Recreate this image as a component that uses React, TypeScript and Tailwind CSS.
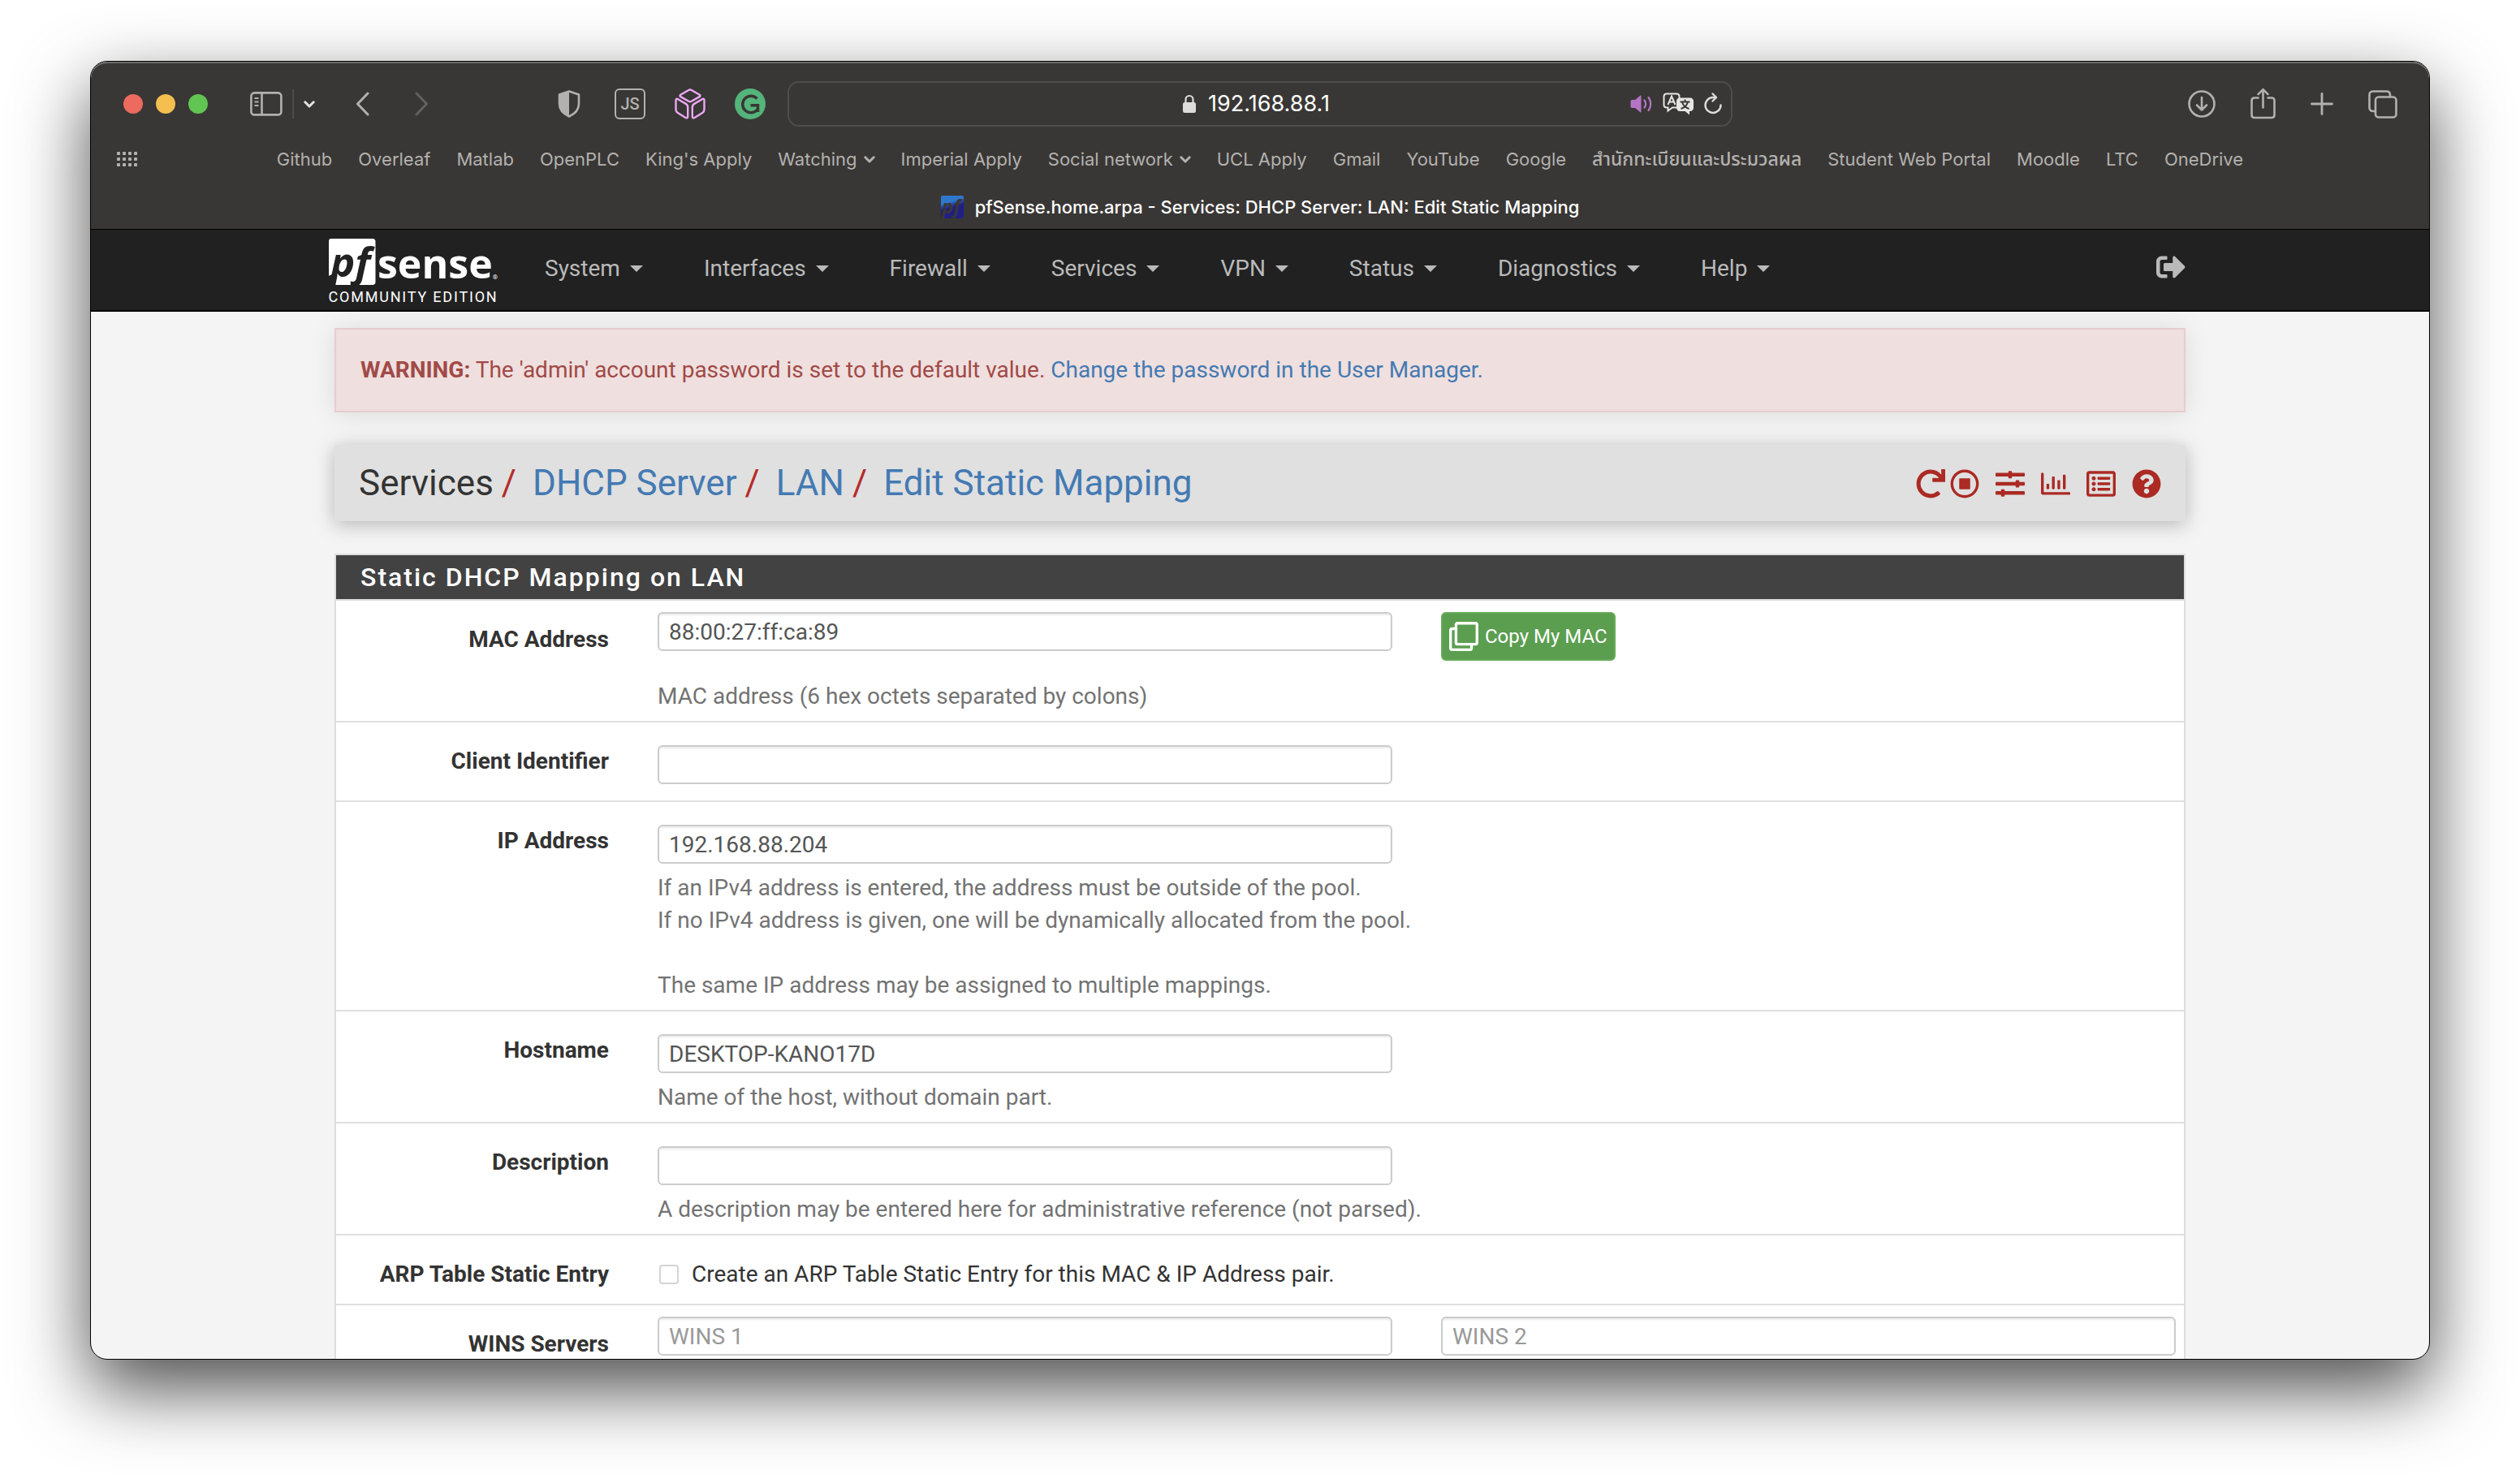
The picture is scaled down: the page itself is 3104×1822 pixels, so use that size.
import React from "react";
import {
  FaRedo,
  FaRegChartBar,
  FaRegClone,
  FaRegListAlt,
  FaRegStopCircle,
  FaQuestionCircle,
  FaSignOutAlt,
  FaSlidersH,
} from "react-icons/fa";

const bookmarks: { label: string; folder?: boolean; thai?: boolean }[] = [
  { label: "Github" },
  { label: "Overleaf" },
  { label: "Matlab" },
  { label: "OpenPLC" },
  { label: "King's Apply" },
  { label: "Watching", folder: true },
  { label: "Imperial Apply" },
  { label: "Social network", folder: true },
  { label: "UCL Apply" },
  { label: "Gmail" },
  { label: "YouTube" },
  { label: "Google" },
  { label: "สำนักทะเบียนและประมวลผล", thai: true },
  { label: "Student Web Portal" },
  { label: "Moodle" },
  { label: "LTC" },
  { label: "OneDrive" },
];

const menus = ["System", "Interfaces", "Firewall", "Services", "VPN", "Status", "Diagnostics", "Help"];

function SmallChevron({ className }: { className?: string }) {
  return (
    <svg viewBox="0 0 14 9" width="14" height="9" fill="none" stroke="currentColor" strokeWidth="3" strokeLinecap="round" strokeLinejoin="round" className={className}>
      <path d="M1.8 1.8 7 7l5.2-5.2" />
    </svg>
  );
}

function WindowControls() {
  return (
    <div className="flex gap-4">
      <button aria-label="Close" className="size-6 rounded-full bg-[#ed6a5e]" />
      <button aria-label="Minimise" className="size-6 rounded-full bg-[#f5bf4f]" />
      <button aria-label="Zoom" className="size-6 rounded-full bg-[#61c554]" />
    </div>
  );
}

function LeftTools() {
  return (
    <div className="flex items-center pl-10 text-[#b3b1af]">
      <WindowControls />
      <button aria-label="Sidebar" className="ml-[52px]">
        <svg viewBox="0 0 40 30" width="40" height="30" fill="none" stroke="currentColor" strokeWidth="2.6">
          <rect x="1.4" y="1.4" width="37" height="27" rx="4" />
          <path d="M14.5 1.5v27" />
          <path d="M5.5 8h5M5.5 12.5h5M5.5 17h5" strokeWidth="1.8" />
        </svg>
      </button>
      <span className="ml-3 h-9 w-0.5 bg-[#4c4b49]" />
      <button aria-label="Tab groups" className="ml-3 text-[#e4e3e2]">
        <SmallChevron />
      </button>
      <button aria-label="Back" className="ml-[50px]">
        <svg viewBox="0 0 17 30" width="17" height="30" fill="none" stroke="currentColor" strokeWidth="3" strokeLinecap="round" strokeLinejoin="round">
          <path d="M15 2 2.5 15 15 28" />
        </svg>
      </button>
      <button aria-label="Forward" className="ml-14 text-[#62615f]">
        <svg viewBox="0 0 17 30" width="17" height="30" fill="none" stroke="currentColor" strokeWidth="3" strokeLinecap="round" strokeLinejoin="round">
          <path d="M2 2l12.500 13L2 28" />
        </svg>
      </button>
      <div className="ml-auto flex items-center gap-9 pr-[27px]">
        <button aria-label="Privacy report">
          <svg viewBox="0 0 38 38" width="38" height="38">
            <path d="M18 3.500 30 7.500v11.500c0 7.500-5.500 12.500-12 15.500C11.500 31.500 6 26.500 6 19V7.500z" fill="none" stroke="#b3b1af" strokeWidth="2.6" strokeLinejoin="round" />
            <path d="M18 3.500v31C11.500 31.500 6 26.500 6 19V7.500z" fill="#b3b1af" />
          </svg>
        </button>
        <button aria-label="JavaScript blocker" className="flex size-[38px] items-center justify-center rounded-md border-2 border-[#b3b1af] font-['Roboto',sans-serif] text-xl font-medium text-[#b3b1af]">
          JS
        </button>
        <button aria-label="Cube extension">
          <svg viewBox="0 0 38 38" width="38" height="38" fill="none" stroke="#eca8f6" strokeWidth="2.400" strokeLinejoin="round">
            <path d="M17.300 2 7.300 7.800c-1.100.7-1.100 1.700 0 2.300L17.300 15.800c1.200.6 2.200.6 3.400 0L30.700 10.100c1.100-.6 1.100-1.600 0-2.300L20.700 2c-1.200-.7-2.200-.7-3.400 0z" />
            <path d="M1.500 14.500v11.500c0 2 .7 3 2.300 4L13.500 36c1.600.9 2.700.3 2.700-1.500V23c0-2-.7-3.100-2.400-4.100L4.200 13.200c-1.600-.9-2.700-.4-2.700 1.300z" />
            <path d="M36.500 14.500v11.500c0 2-.7 3-2.300 4L24.500 36c-1.600.9-2.700.3-2.700-1.500V23c0-2 .7-3.100 2.400-4.100l9.600-5.700c1.600-.9 2.700-.4 2.700 1.300z" />
          </svg>
        </button>
        <button aria-label="Grammarly">
          <svg viewBox="0 0 38 38" width="38" height="38" fill="none">
            <circle cx="19" cy="19" r="19" fill="#54b47a" />
            <path d="M27.500 12.500A10.300 10.300 0 1 0 28 26" stroke="#393735" strokeWidth="3.500" />
            <path d="M19.500 20.800H28.500V29" stroke="#393735" strokeWidth="3.500" />
          </svg>
        </button>
      </div>
    </div>
  );
}

function AddressBar() {
  return (
    <div className="flex h-14 items-center rounded-[14px] border-2 border-[#4e4d4b] pr-2.5">
      <div className="flex-1" />
      <label className="flex items-center gap-3.5">
        <svg viewBox="0 0 18 24" width="18" height="24" aria-label="Address">
          <rect x="1" y="10" width="16" height="13" rx="2.500" fill="#dddcdb" />
          <path d="M4.500 11V6.500a4.500 4.500 0 0 1 9 0V11" fill="none" stroke="#dddcdb" strokeWidth="2.200" />
        </svg>
        <input
          type="text"
          defaultValue="192.168.88.1"
          className="field-sizing-content bg-transparent font-['Inter',sans-serif] text-[27px] leading-8 text-white outline-none"
        />
      </label>
      <div className="flex flex-1 items-center justify-end gap-3">
        <button aria-label="Mute tab">
          <svg viewBox="0 0 28 24" width="28" height="24" fill="none" stroke="#b674c6" strokeWidth="2.200" strokeLinecap="round">
            <path d="M1 8.500C1 8 1.400 7.500 2 7.500h4L13 1.800v20.400L6 16.500H2c-.6 0-1-.5-1-1z" fill="#b674c6" strokeWidth="1" strokeLinejoin="round" />
            <path d="M17.500 7.500c2 2.700 2 6.300 0 9M22.500 4c3.600 4.700 3.600 11.300 0 16" />
          </svg>
        </button>
        <button aria-label="Translate">
          <svg viewBox="0 0 38 28" width="38" height="28" fill="none">
            <path d="M17 18.500H12L6.500 22.500v-4H5c-2 0-3.500-1.500-3.500-3.500V5c0-2 1.500-3.500 3.500-3.500h12c2 0 3.500 1.500 3.500 3.500v2" stroke="#e6e5e4" strokeWidth="2" />
            <path d="M6.500 15 11 4.500 15.500 15M8 11.500h6" stroke="#e6e5e4" strokeWidth="2" />
            <path d="M21 6.500h13c2.200 0 4 1.800 4 4v8.500c0 2.200-1.800 4-4 4h-1v4.500L27.500 23H21c-2.200 0-4-1.800-4-4v-8.500c0-2.200 1.800-4 4-4z" fill="#e6e5e4" />
            <path d="M21.500 11.500h12M27.500 8.500v3M31 11.500c-1 4-4.500 7.300-8.500 8.500M24 11.500c1 4 4.500 7.300 8.500 8.500" stroke="#393735" strokeWidth="1.900" />
          </svg>
        </button>
        <button aria-label="Reload">
          <svg viewBox="0 0 24 28" width="24" height="28" fill="none" stroke="#dddcdb" strokeWidth="2.400" strokeLinecap="round" strokeLinejoin="round">
            <path d="M21.500 15.500A9.500 9.500 0 1 1 12 6h3.500" />
            <path d="M11.500 1.500 16 6l-4.500 4.500" />
          </svg>
        </button>
      </div>
    </div>
  );
}

function RightTools() {
  return (
    <div className="flex items-center justify-end gap-[43px] pr-[39px] text-[#b3b1af]">
      <button aria-label="Downloads">
        <svg viewBox="0 0 34 34" width="34" height="34" fill="none" stroke="currentColor" strokeWidth="2.600" strokeLinecap="round" strokeLinejoin="round">
          <circle cx="17" cy="17" r="15.500" />
          <path d="M17 9v15.500M11 18.500l6 6 6-6" />
        </svg>
      </button>
      <button aria-label="Share">
        <svg viewBox="0 0 31 40" width="31" height="40" fill="none" stroke="currentColor" strokeWidth="2.600" strokeLinecap="round" strokeLinejoin="round">
          <path d="M9.500 12.500H5c-2.200 0-3.500 1.300-3.500 3.500v17.500C1.500 35.700 2.800 37 5 37h21c2.200 0 3.500-1.300 3.500-3.500V16c0-2.200-1.300-3.500-3.500-3.500h-4.500" />
          <path d="M15.500 24.500V2.500M9.500 8.200l6-6 6 6" />
        </svg>
      </button>
      <button aria-label="New tab">
        <svg viewBox="0 0 28 28" width="28" height="28" fill="none" stroke="currentColor" strokeWidth="2.800" strokeLinecap="round">
          <path d="M14 1.500v25M1.500 14h25" />
        </svg>
      </button>
      <button aria-label="Tab overview">
        <svg viewBox="0 0 36 35" width="36" height="35" fill="none" stroke="currentColor" strokeWidth="2.600" strokeLinejoin="round">
          <rect x="9" y="8.500" width="25.500" height="25" rx="4" />
          <path d="M9 26H6c-2.800 0-4.500-1.700-4.500-4.500V6c0-2.800 1.700-4.500 4.500-4.500h16.500c2.800 0 4.500 1.700 4.500 4.500v2.500" />
        </svg>
      </button>
    </div>
  );
}

function BookmarksBar() {
  return (
    <div className="flex h-8 items-center px-8">
      <button aria-label="Show bookmarks" className="w-[26px]">
        <svg viewBox="0 0 26 20" width="26" height="20" fill="#b3b1af">
          {[0, 7, 14, 21].map((x) =>
            [1, 8, 15].map((y) => <rect key={`${x}-${y}`} x={x} y={y} width="4" height="4" rx="1" />)
          )}
        </svg>
      </button>
      <nav className="flex flex-1 justify-center gap-8 pr-[26px] font-['Inter','Noto_Sans_Thai','Noto_Sans',sans-serif] text-[22px] leading-7 whitespace-nowrap text-[#b3b1af]">
        {bookmarks.map((b) => (
          <a key={b.label} href="#" className="flex items-center gap-2">
            {b.thai ? <span className="text-[23px] font-medium">{b.label}</span> : b.label}
            {b.folder && <SmallChevron />}
          </a>
        ))}
      </nav>
    </div>
  );
}

function TabTitle() {
  return (
    <div className="flex h-[70px] items-center justify-center gap-3.5 pt-4">
      <svg viewBox="0 0 28 28" width="28" height="28" aria-label="pfSense" className="overflow-visible">
        <defs>
          <linearGradient id="favicon" x1="0" y1="0" x2="0.300" y2="1">
            <stop offset="0.350" stopColor="#2f76cd" />
            <stop offset="0.600" stopColor="#1f1f86" />
          </linearGradient>
        </defs>
        <rect width="28" height="28" rx="2" fill="url(#favicon)" />
        <text x="1" y="22" fontFamily="Open Sans, sans-serif" fontSize="24" fontWeight="700" fontStyle="italic" fill="#393735">pf</text>
      </svg>
      <span className="font-['Inter',sans-serif] text-[22px] leading-7 font-medium text-white">
        pfSense.home.arpa - Services: DHCP Server: LAN: Edit Static Mapping
      </span>
    </div>
  );
}

function Logo() {
  return (
    <a href="#" className="flex w-[214px] flex-col items-center self-start pt-[11px] text-white">
      <span className="flex h-[58px] items-start">
        <svg viewBox="0 0 58 58" width="58" height="58" aria-label="pf" className="overflow-visible">
          <path d="M3 0h51c2 0 3.500 1.500 3.500 3.500v50c0 2-1.500 3.500-3.500 3.500H6L9 43 0 46V3c0-2 1-3 3-3z" fill="#fff" />
          <path d="M0 46V57h7l3-16z" fill="#212121" />
          <text x="2" y="47" fontFamily="Open Sans, sans-serif" fontSize="51" fontWeight="700" fontStyle="italic" fill="#212121">pf</text>
        </svg>
        <span className="pl-0.5 font-['Open_Sans',sans-serif] text-[50px] leading-[60px] font-bold">sense</span>
        <span className="self-end pb-1 text-[8px] leading-3">®</span>
      </span>
      <span className="font-['Roboto',sans-serif] text-lg leading-7 font-normal tracking-widest whitespace-nowrap">COMMUNITY EDITION</span>
    </a>
  );
}

function NavBar() {
  return (
    <header className="h-[101px] shrink-0 border-b-2 border-black bg-[#212121]">
      <div className="mx-auto flex h-full max-w-[2300px] items-center pr-2.5">
        <Logo />
        <nav className="flex gap-[75px] pb-1 pl-[55px] text-[28px] leading-10 text-[#bababa]">
          {menus.map((m) => (
            <button key={m} className="flex items-center gap-3">
              {m}
              <svg viewBox="0 0 16 8" width="16" height="8" fill="currentColor">
                <path d="M0 0h16L8 8z" />
              </svg>
            </button>
          ))}
        </nav>
        <button aria-label="Log out" className="ml-auto pb-2 text-[#bababa]">
          <FaSignOutAlt size={36} />
        </button>
      </div>
    </header>
  );
}

function Breadcrumbs() {
  const links = ["DHCP Server", "LAN", "Edit Static Mapping"];
  return (
    <div className="mt-10 flex h-[94px] items-center rounded-sm bg-[#e0e0e0] px-[30px] shadow-[0_4px_24px_rgba(0,0,0,0.26)]">
      <h1 className="flex text-[44px] leading-[52px] text-[#333333]">
        <span>Services</span>
        {links.map((l) => (
          <span key={l} className="flex">
            <span className="pr-5 pl-2.5 text-[#b52b27]">/</span>
            <a href="#" className="text-[#447ab3]">{l}</a>
          </span>
        ))}
      </h1>
      <div className="ml-auto flex items-center gap-5 pt-0.5 text-[#ab2a24]">
        <div className="flex gap-1.5">
          <button aria-label="Restart service"><FaRedo size={36} /></button>
          <button aria-label="Stop service"><FaRegStopCircle size={36} /></button>
        </div>
        <button aria-label="Related settings"><FaSlidersH size={36} /></button>
        <button aria-label="Related status"><FaRegChartBar size={36} /></button>
        <button aria-label="Related log entries"><FaRegListAlt size={36} /></button>
        <button aria-label="Help"><FaQuestionCircle size={36} /></button>
      </div>
    </div>
  );
}

const fieldClass =
  "block h-12 w-full rounded-md border-2 border-[#cccccc] bg-white px-3 text-[28px] leading-10 text-[#555555] shadow-[inset_0_2px_2px_rgba(0,0,0,0.075)] outline-none placeholder:text-[#999999]";

function Row({ id, label, compact, children }: { id: string; label: string; compact?: boolean; children: React.ReactNode }) {
  return (
    <div className="grid grid-cols-[336px_1fr_1fr] gap-x-[60px] border-b-2 border-[#dfdfdf] pr-2.5 last:border-b-0">
      <label htmlFor={id} className="pt-7 text-right font-bold text-[#333333]">{label}</label>
      <div className={compact ? "col-span-2 grid grid-cols-2 gap-x-[60px] pt-3.5" : "col-span-2 grid grid-cols-2 gap-x-[60px] pt-7"}>
        {children}
      </div>
    </div>
  );
}

function Help({ children }: { children: React.ReactNode }) {
  return <p className="col-span-2 py-2.5 text-[#737373]">{children}</p>;
}

function MappingForm() {
  return (
    <form className="mt-10 border-2 border-[#dddddd] bg-white text-[28px] leading-10">
      <h2 className="h-14 border-b-2 border-[#dddddd] bg-[#424242] px-[30px] text-[32px] leading-[54px] font-medium tracking-[2px] text-white">
        Static DHCP Mapping on LAN
      </h2>
      <Row id="mac" label="MAC Address" compact>
        <input id="mac" type="text" defaultValue="88:00:27:ff:ca:89" className={fieldClass} />
        <button type="button" className="flex h-[60px] items-center gap-2 justify-self-start rounded-md border-2 border-[#67ab59] bg-[#5b9e50] px-2 text-2xl text-white">
          <FaRegClone size={36} />
          Copy My MAC
        </button>
        <p className="col-span-2 pt-6 pb-2.5 text-[#737373]">MAC address (6 hex octets separated by colons)</p>
      </Row>
      <Row id="cid" label="Client Identifier">
        <input id="cid" type="text" className={fieldClass} />
        <div className="h-[68px]" />
      </Row>
      <Row id="ip" label="IP Address">
        <input id="ip" type="text" defaultValue="192.168.88.204" className={fieldClass} />
        <Help>
          If an IPv4 address is entered, the address must be outside of the pool.
          <br />
          If no IPv4 address is given, one will be dynamically allocated from the pool.
          <br />
          <br />
          The same IP address may be assigned to multiple mappings.
        </Help>
      </Row>
      <Row id="host" label="Hostname">
        <input id="host" type="text" defaultValue="DESKTOP-KANO17D" className={fieldClass} />
        <Help>Name of the host, without domain part.</Help>
      </Row>
      <Row id="descr" label="Description">
        <input id="descr" type="text" className={fieldClass} />
        <Help>A description may be entered here for administrative reference (not parsed).</Help>
      </Row>
      <Row id="arp" label="ARP Table Static Entry">
        <label className="col-span-2 flex items-center gap-4 pb-4 pl-0.5 text-[#333333]">
          <input id="arp" type="checkbox" className="size-6 appearance-none rounded-sm border-2 border-[#d4d4d4] bg-white" />
          Create an ARP Table Static Entry for this MAC &amp; IP Address pair.
        </label>
      </Row>
      <Row id="wins" label="WINS Servers" compact>
        <input id="wins" type="text" placeholder="WINS 1" className={fieldClass} />
        <input type="text" aria-label="WINS 2" placeholder="WINS 2" className={fieldClass} />
        <div className="h-5" />
      </Row>
    </form>
  );
}

export default function App() {
  return (
    <div className="h-screen overflow-hidden bg-white px-[111px] pt-[75px] pb-[147px] font-['Roboto',sans-serif]">
      <div className="flex h-full flex-col overflow-hidden rounded-[21px] border border-black bg-[#f4f4f4] shadow-[0_36px_90px_rgba(0,0,0,0.7)]">
        <div className="shrink-0 rounded-t-[20px] border-b border-black bg-[#393735] shadow-[inset_0_2px_0_#6b6b67]">
          <div className="grid h-[104px] grid-cols-[1fr_minmax(0,1164px)_1fr] items-center">
            <LeftTools />
            <AddressBar />
            <RightTools />
          </div>
          <BookmarksBar />
          <TabTitle />
        </div>
        <NavBar />
        <main className="mx-auto w-full max-w-[2280px] pt-5">
          <div role="alert" className="border-2 border-[#e6ccd1] bg-[#efdfde] p-[30px] text-[28px] leading-10 text-[#a14a47] shadow-[0_2px_30px_rgba(0,0,0,0.1)]">
            <strong className="font-bold">WARNING:</strong> The 'admin' account password is set to the default value.{" "}
            <a href="#" className="text-[#447ab3]">Change the password in the User Manager.</a>
          </div>
          <Breadcrumbs />
          <MappingForm />
        </main>
      </div>
    </div>
  );
}
